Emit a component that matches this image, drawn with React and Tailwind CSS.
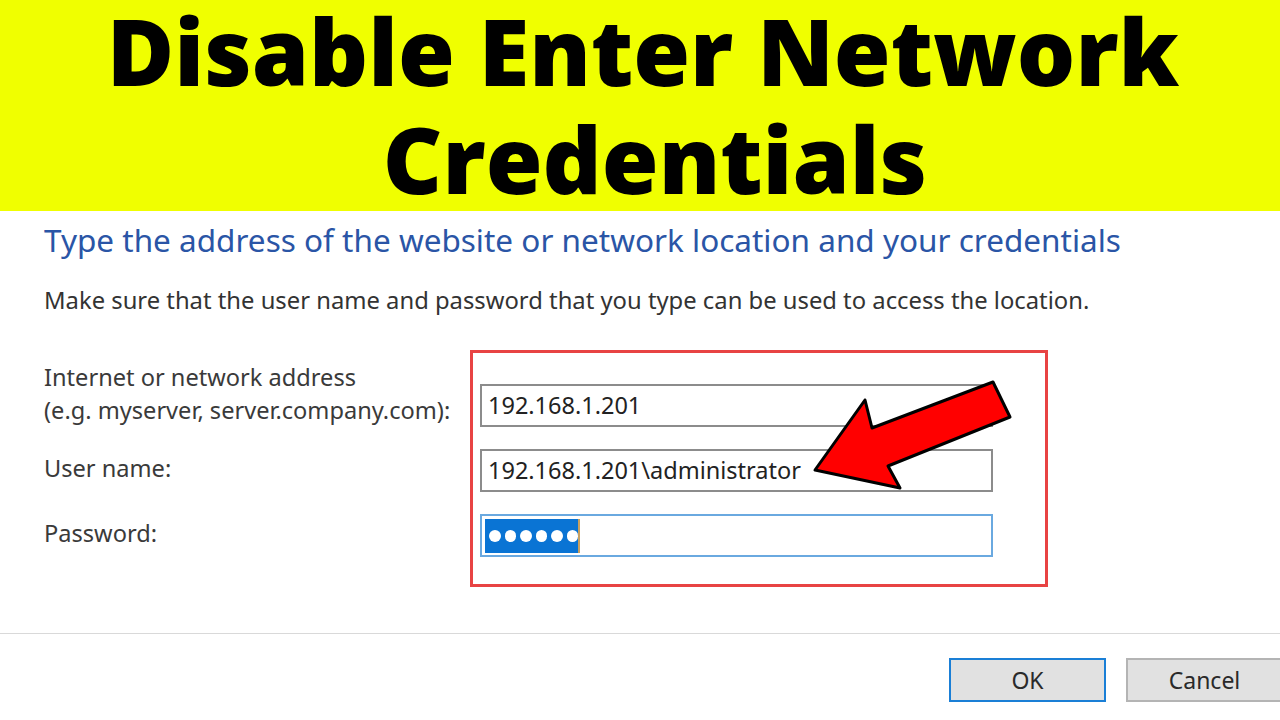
import React from 'react';

const Arrow = () => {
    return (
        <svg className="absolute left-[800px] top-[370px]" width="220" height="130" viewBox="0 0 220 130">
            <polygon
                points="15,100 100,118 88,96 210,47 193,12 72,58 65,30"
                fill="#ff0000"
                stroke="#000000"
                strokeWidth="3"
                strokeLinejoin="round"
            />
        </svg>
    );
};

const App = () => {
    return (
        <div className="relative w-[1280px] h-[720px] overflow-hidden bg-white font-['Noto_Sans','Open_Sans',sans-serif]">
            {/* Title banner */}
            <div className="h-[211px] bg-[#f0ff00] flex flex-col items-center justify-center pb-[2px] pl-[6px]">
                <h1 className="font-['Open_Sans','Noto_Sans',sans-serif] font-extrabold text-[92px] leading-[108px] text-black text-center">
                    <span className="block">Disable Enter Network</span>
                    <span className="block pl-[24px]">Credentials</span>
                </h1>
            </div>

            {/* Dialog body */}
            <div className="px-[44px]">
                <h2 className="mt-[9px] text-[31.5px] leading-[40px] text-[#2a55a6] whitespace-nowrap">
                    Type the address of the website or network location and your credentials
                </h2>
                <p className="mt-[25px] text-[23.8px] leading-[30px] text-[#333333] whitespace-nowrap">
                    Make sure that the user name and password that you type can be used to access the location.
                </p>

                <div className="mt-[35px] flex">
                    <div className="w-[426px] flex flex-col text-[23.6px] text-[#3a3a3a] whitespace-nowrap">
                        <div className="mt-[11px] leading-[33px]">
                            Internet or network address
                            <br />
                            (e.g. myserver, server.company.com):
                        </div>
                        <div className="mt-[25px] leading-[33px]">User name:</div>
                        <div className="mt-[32px] leading-[33px]">Password:</div>
                    </div>

                    <div className="w-[578px] h-[237px] border-[3px] border-[#e84343] pt-[31px] pl-[7px] flex flex-col gap-[22px]">
                        <div className="w-[513px] h-[43px] border-2 border-[#8c8c8c] bg-white flex items-center px-[6px] text-[23.5px] text-[#222222]">
                            192.168.1.201
                        </div>
                        <div className="w-[513px] h-[43px] border-2 border-[#8c8c8c] bg-white flex items-center px-[6px] text-[23.5px] text-[#222222]">
                            192.168.1.201\administrator
                        </div>
                        <div className="w-[513px] h-[43px] border-2 border-[#6aa9e0] bg-white flex items-center px-[3px]">
                            <div className="h-[34px] w-[93px] bg-[#0a74d4] flex items-center gap-[4px] pl-[4px]">
                                <span className="w-[12px] h-[12px] rounded-full bg-white" />
                                <span className="w-[12px] h-[12px] rounded-full bg-white" />
                                <span className="w-[12px] h-[12px] rounded-full bg-white" />
                                <span className="w-[12px] h-[12px] rounded-full bg-white" />
                                <span className="w-[12px] h-[12px] rounded-full bg-white" />
                                <span className="w-[12px] h-[12px] rounded-full bg-white" />
                            </div>
                            <div className="h-[34px] w-[2px] bg-[#c8a060]" />
                        </div>
                    </div>
                </div>
            </div>

            {/* Footer with buttons */}
            <div className="mt-[46px] border-t border-[#d9d9d9]">
                <div className="pt-[24px] pl-[949px] flex gap-[20px]">
                    <button className="shrink-0 w-[157px] h-[44px] bg-[#e1e1e1] border-2 border-[#1a7fd6] text-[23px] text-[#2a2a2a]">
                        OK
                    </button>
                    <button className="shrink-0 w-[157px] h-[44px] bg-[#e1e1e1] border-2 border-[#b4b4b4] text-[23px] text-[#2a2a2a]">
                        Cancel
                    </button>
                </div>
            </div>

            <Arrow />
        </div>
    );
};

export default App;
